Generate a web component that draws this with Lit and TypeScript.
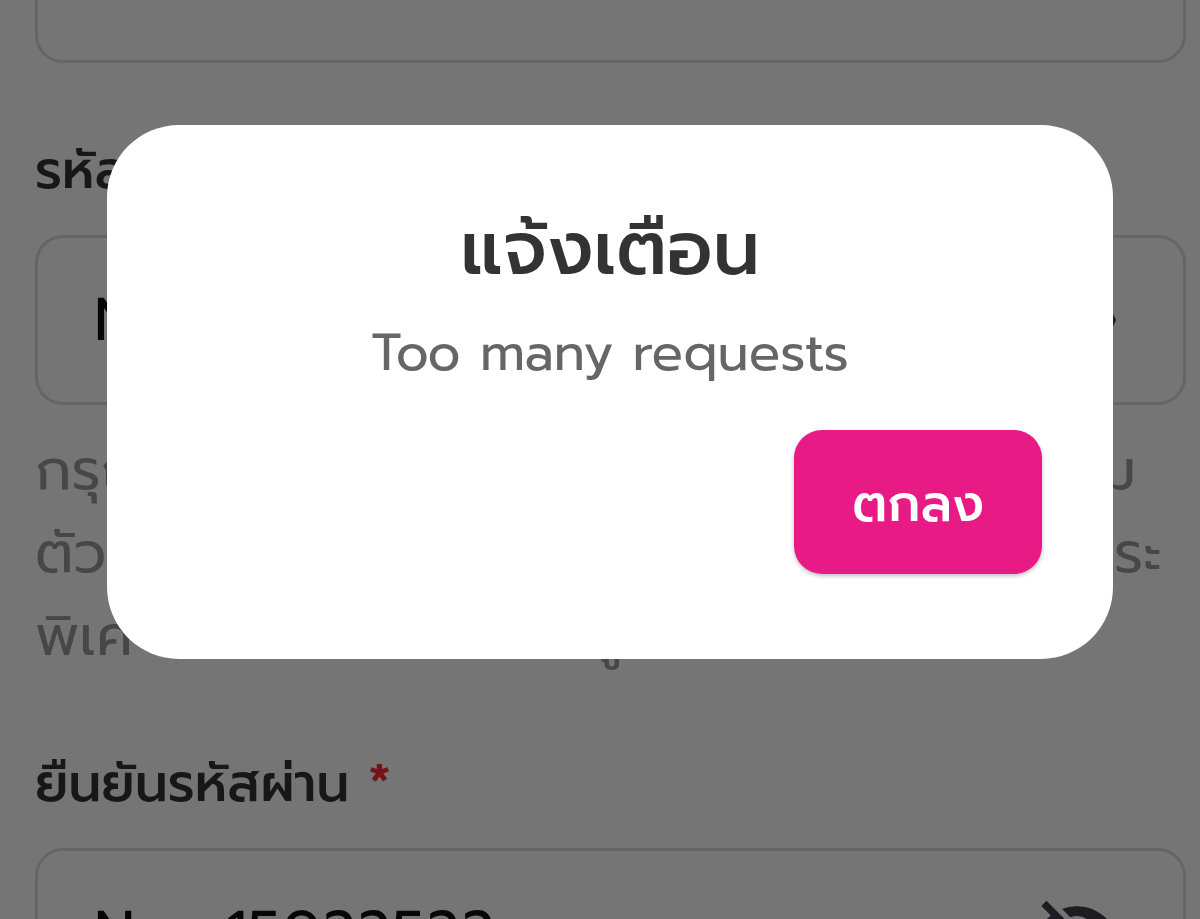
import { LitElement, html, css } from "lit";
import { customElement, property, state } from "lit/decorators.js";

@customElement("password-field")
export class PasswordField extends LitElement {
  static styles = css`
    :host { display: block; }
    .label {
      display: block;
      margin-bottom: 24px;
      font-size: 52px;
      font-weight: 500;
      line-height: 80px;
      color: #333;
    }
    .required { font-weight: 600; color: #ff2a38; }
    .box {
      display: flex;
      align-items: center;
      box-sizing: border-box;
      height: 170px;
      padding: 0 64px 0 56px;
      border: 3px solid #dcdcdc;
      border-radius: 28px;
    }
    .input {
      flex: 1;
      min-width: 0;
      padding: 0;
      border: 0;
      outline: 0;
      background: none;
      font: inherit;
      font-size: 60px;
      color: #111;
    }
    .toggle {
      display: flex;
      padding: 0;
      border: 0;
      background: none;
      color: #403e4a;
    }
    .icon { width: 84px; height: 84px; fill: currentColor; stroke: currentColor; stroke-width: 0.3; }
  `;

  @property() label = "";
  @property() value = "";

  render() {
    return html`
      <label class="label" for="field">${this.label} <span class="required">*</span></label>
      <div class="box">
        <input class="input" id="field" type="text" autocomplete="off" .value=${this.value} />
        <button class="toggle" type="button" aria-label="ซ่อนรหัสผ่าน">
          <svg class="icon" viewBox="0 0 24 24" aria-hidden="true">
            <path
              d="M12 7c2.76 0 5 2.24 5 5 0 .65-.13 1.26-.36 1.83l2.92 2.92c1.51-1.26 2.7-2.89 3.43-4.75-1.73-4.39-6-7.5-11-7.5-1.4 0-2.74.25-3.98.7l2.16 2.16C10.74 7.13 11.35 7 12 7zM2 4.27l2.28 2.28.46.46C3.08 8.3 1.78 10.02 1 12c1.73 4.39 6 7.5 11 7.5 1.55 0 3.03-.3 4.38-.84l.42.42L19.73 22 21 20.73 3.27 3 2 4.27zM7.53 9.8l1.55 1.55c-.05.21-.08.43-.08.65 0 1.66 1.34 3 3 3 .22 0 .44-.03.65-.08l1.55 1.55c-.67.33-1.41.53-2.2.53-2.76 0-5-2.24-5-5 0-.79.2-1.53.53-2.2zm4.31-.78l3.15 3.15.02-.16c0-1.66-1.34-3-3-3l-.17.01z"
            />
          </svg>
        </button>
      </div>
    `;
  }
}

@customElement("app-root")
export class AppRoot extends LitElement {
  static styles = css`
    :host {
      display: block;
      position: relative;
      height: 100vh;
      overflow: hidden;
      background: #fff;
      font-family: Prompt, Kanit, "Noto Sans", sans-serif;
    }
    .form {
      display: flex;
      flex-direction: column;
      margin-top: -107px;
      padding: 0 14px 0 35px;
    }
    .previous {
      box-sizing: border-box;
      height: 170px;
      flex: none;
      margin-bottom: 68px;
      border: 3px solid #dcdcdc;
      border-radius: 28px;
      outline: 0;
      background: none;
    }
    .hint {
      margin: 24px 24px 66px 0;
      font-size: 57px;
      line-height: 83px;
      color: #9c9c9c;
    }
    .line {
      display: flex;
      justify-content: space-between;
      white-space: nowrap;
    }
    .line.short { padding-right: 26px; }
    .scrim {
      position: absolute;
      inset: 0;
      padding: 125px 87px 0 107px;
      background: rgba(0, 0, 0, 0.54);
    }
    .dialog {
      display: flex;
      flex-direction: column;
      box-sizing: border-box;
      padding: 70px 71px 85px;
      border-radius: 72px;
      background: #fff;
      text-align: center;
    }
    .title {
      margin: 0;
      font-size: 74px;
      font-weight: 500;
      line-height: 108px;
      color: #333;
    }
    .message {
      margin: 10px 0 37px;
      font-size: 52px;
      line-height: 80px;
      color: #666;
    }
    .confirm {
      align-self: flex-end;
      padding: 34px 58px 30px;
      border: 0;
      border-radius: 28px;
      background: #e81a86;
      box-shadow: 0 2px 4px rgba(0, 0, 0, 0.25);
      font: inherit;
      font-size: 51px;
      font-weight: 500;
      line-height: 80px;
      color: #fff;
    }
  `;

  @state() private open = true;

  render() {
    return html`
      <form class="form">
        <input class="previous" type="text" aria-label="อีเมล" />
        <password-field label="รหัสผ่าน" value="Nom15022522"></password-field>
        <div class="hint">
          <div class="line short"><span>กรุณาตั้งรหัสผ่าน</span><span>ตาม</span></div>
          <div class="line"><span>ตัวอักษรและตัวเลข</span><span>อักขระ</span></div>
          <div class="line"><span>พิเศ -และไม่ควรเดาได้อยู่</span></div>
        </div>
        <password-field label="ยืนยันรหัสผ่าน" value="Nom15022522"></password-field>
      </form>
      ${this.open
        ? html`<div class="scrim">
            <section class="dialog" role="alertdialog" aria-labelledby="title" aria-describedby="message">
              <h2 class="title" id="title">แจ้งเตือน</h2>
              <p class="message" id="message">Too many requests</p>
              <button class="confirm" type="button" @click=${() => (this.open = false)}>ตกลง</button>
            </section>
          </div>`
        : null}
    `;
  }
}
